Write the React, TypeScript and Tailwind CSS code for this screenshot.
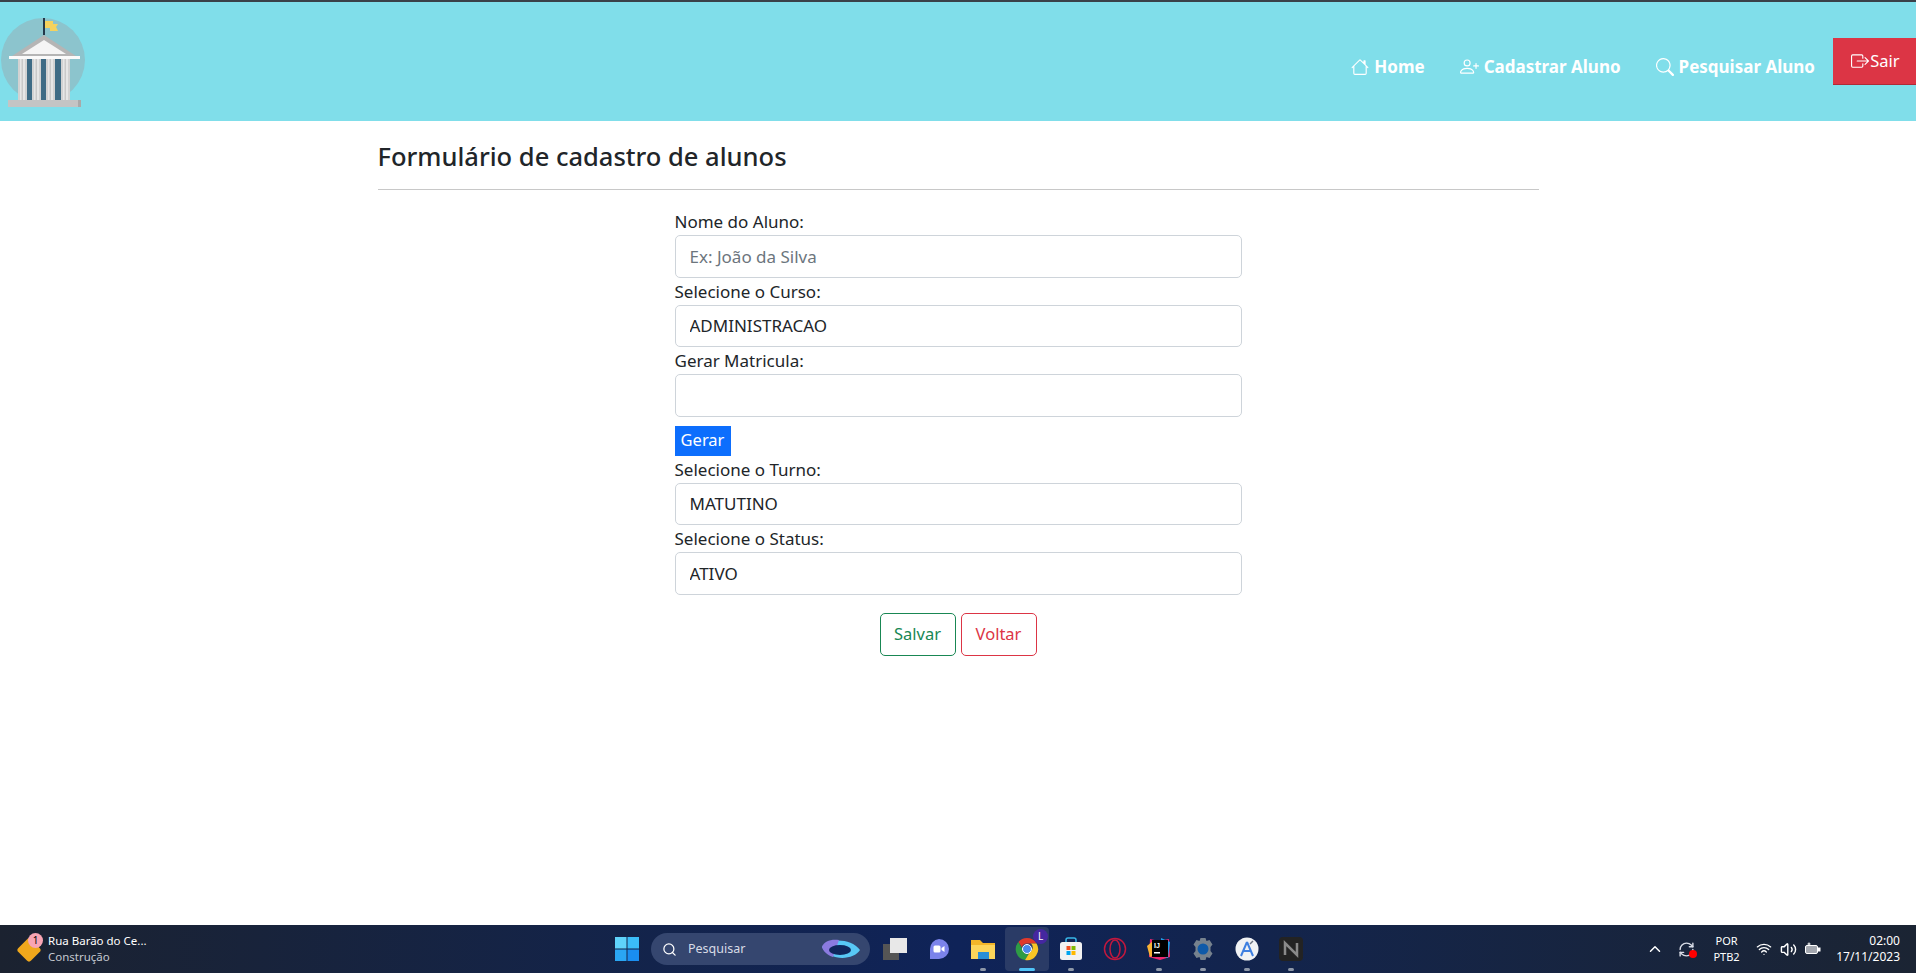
import {BsBoxArrowRight, BsHouse, BsPersonPlus, BsSearch} from 'react-icons/bs';
import {LuChevronUp, LuRefreshCw, LuSearch, LuVolume2, LuWifi} from 'react-icons/lu';

const Logo = () => (
  <svg width="86" height="96" viewBox="0 0 86 96">
    <circle cx="43" cy="44" r="42" fill="#8cc4cd" />
    <rect x="43" y="2" width="2" height="17" fill="#24384a" />
    <path d="M45 5h8v3h5l-2 3 2 4h-8v-3h-5z" fill="#f5d25e" />
    <path d="M44 19 L12 40 H76 Z" fill="#b5b5b5" />
    <path d="M44 24 L22 38 H66 Z" fill="#f5f5f5" />
    <rect x="9" y="40" width="71" height="3" fill="#fafafa" />
    <rect x="27" y="43" width="35" height="41" fill="#3e6b85" />
    {[18, 32, 46, 61].map((x) => (
      <g key={x}>
        <rect x={x} y="43" width="9" height="41" fill="#d2d2d2" />
        <rect x={x + 2} y="43" width="5" height="41" fill="#e6e6e6" />
        <rect x={x + 3.5} y="43" width="1.500" height="41" fill="#c9c9c9" />
      </g>
    ))}
    <rect x="8" y="84" width="73" height="7" fill="#c4c4c4" />
    <rect x="78" y="84" width="3" height="7" fill="#a9a9a9" />
  </svg>
);

const Field = ({label, value, placeholder}: {label: string; value?: string; placeholder?: string}) => (
  <div className="flex flex-col">
    <label className="h-[27px] leading-[27px] text-[#212529]">{label}</label>
    <input
      readOnly
      value={value}
      placeholder={placeholder}
      className="h-[42.500px] w-full rounded-[5px] border border-[#ced4da] bg-white px-[14px] text-[#212529] placeholder:text-[#6c757d] outline-none"
    />
  </div>
);

const NavItem = ({icon, text}: {icon: React.ReactNode; text: string}) => (
  <a className="flex items-center gap-[5px] text-white font-bold text-[17px]">
    {icon}
    {text}
  </a>
);

const AppIcon = ({children, dot, active}: {children: React.ReactNode; dot?: boolean; active?: boolean}) => (
  <div className={`relative flex h-[44px] w-[44px] items-center justify-center rounded ${active ? 'bg-[#2a3b66]' : ''}`}>
    {children}
    {dot && !active && <span className="absolute bottom-0 h-[3px] w-[6px] rounded-full bg-[#8d97a8]" />}
    {active && <span className="absolute bottom-0 h-[3px] w-[16px] rounded-full bg-[#4fc3f7]" />}
  </div>
);

const Taskbar = () => (
  <footer className="flex h-[48px] items-center bg-gradient-to-r from-[#1b2230] via-[#0f2358] to-[#1b2433] text-white font-['Noto_Sans',sans-serif]">
    {/* Widget */}
    <div className="flex w-[610px] items-center pl-[18px]">
      <div className="relative h-[24px] w-[24px]">
        <div className="absolute left-[2px] top-[4px] h-[18px] w-[18px] rotate-45 rounded-[3px] bg-[#f0a81c]" />
        <span className="absolute left-[10px] top-[-4px] flex h-[15px] w-[15px] items-center justify-center rounded-full bg-[#f8a5b4] text-[10px] text-black">1</span>
      </div>
      <div className="ml-[6px] flex flex-col text-[11.500px] leading-[16px]">
        <span>Rua Barão do Ce...</span>
        <span className="text-[#c4c8d0]">Construção</span>
      </div>
    </div>

    {/* Start + search + apps */}
    <div className="flex items-center">
      <svg width="24" height="24" viewBox="0 0 24 24" className="ml-[5px] mr-[12px]">
        <rect x="0" y="0" width="11.500" height="11.500" fill="#5fd3fb" />
        <rect x="12.500" y="0" width="11.500" height="11.500" fill="#3bbdf9" />
        <rect x="0" y="12.500" width="11.500" height="11.500" fill="#2aa6f3" />
        <rect x="12.500" y="12.500" width="11.500" height="11.500" fill="#1a8ef0" />
      </svg>
      <div className="flex h-[32px] w-[219px] items-center rounded-full bg-[#35466f] pl-[11px] pr-[9px]">
        <LuSearch size={15} className="text-white" />
        <span className="ml-[11px] flex-1 text-[12.500px] text-[#d8dce6]">Pesquisar</span>
        <svg width="40" height="22" viewBox="0 0 40 22">
          <path d="M1 9C7 0 30 0 39 12C33 22 9 24 1 9Z" fill="#58c8f5" />
          <path d="M1 9C3 3 10 1 18 2L12 19C6 17 2 13 1 9Z" fill="#8b7be0" />
          <ellipse cx="19" cy="12" rx="11" ry="5" fill="#10275c" />
        </svg>
      </div>
      <div className="ml-[3px] flex items-center">
        <AppIcon>
          <div className="relative h-[22px] w-[24px]">
            <div className="absolute bottom-0 left-0 h-[16px] w-[16px] bg-[#555]" />
            <div className="absolute right-0 top-0 h-[15px] w-[17px] bg-[#e8e8e8]" />
          </div>
        </AppIcon>
        <AppIcon>
          <svg width="24" height="24" viewBox="0 0 24 24">
            <path d="M12 2a10 10 0 0 1 0 20H3V12A10 10 0 0 1 12 2Z" fill="#7b83eb" />
            <rect x="6.500" y="8.500" width="7" height="7" rx="1.500" fill="#fff" />
            <path d="M14.500 11l3-2v6l-3-2z" fill="#fff" />
          </svg>
        </AppIcon>
        <AppIcon dot>
          <svg width="26" height="24" viewBox="0 0 26 24">
            <path d="M1 3h9l3 3h12v16H1z" fill="#f3b629" />
            <path d="M1 8h24v14H1z" fill="#fcd55a" />
            <rect x="8" y="15" width="11" height="7" fill="#2a8fd8" />
          </svg>
        </AppIcon>
        <AppIcon active>
          <svg width="24" height="24" viewBox="0 0 24 24">
            <path d="M12 1a11 11 0 0 1 9.500 5.500H12a5.500 5.500 0 0 0-5.200 3.700L3.400 5A11 11 0 0 1 12 1Z" fill="#e0392b" />
            <path d="M3.400 5l4.500 8a5.500 5.500 0 0 0 5.700 4.300L10 23A11 11 0 0 1 3.400 5Z" fill="#2e9c45" />
            <path d="M21.500 6.500A11 11 0 0 1 10 23l4.600-7.500a5.500 5.500 0 0 0 1.400-9z" fill="#f8c625" />
            <circle cx="12" cy="12" r="4.500" fill="#4a89ed" stroke="#fff" strokeWidth="1" />
          </svg>
          <span className="absolute right-[1px] top-[2px] flex h-[15px] w-[15px] items-center justify-center rounded-full bg-[#4527a0] text-[10px]">L</span>
        </AppIcon>
        <AppIcon dot>
          <svg width="24" height="24" viewBox="0 0 24 24">
            <path d="M7 5V3a2 2 0 0 1 2-2h6a2 2 0 0 1 2 2v2" fill="none" stroke="#38b6e8" strokeWidth="1.500" />
            <rect x="1" y="5" width="22" height="18" rx="2.500" fill="#f2f2f2" />
            <rect x="7.500" y="9" width="4" height="4" fill="#f25022" />
            <rect x="12.500" y="9" width="4" height="4" fill="#7fba00" />
            <rect x="7.500" y="14" width="4" height="4" fill="#00a4ef" />
            <rect x="12.500" y="14" width="4" height="4" fill="#ffb900" />
          </svg>
        </AppIcon>
        <AppIcon>
          <svg width="24" height="24" viewBox="0 0 24 24" fill="none" stroke="#c2183e" strokeWidth="1.500">
            <circle cx="12" cy="12" r="10.500" />
            <ellipse cx="12" cy="12" rx="5" ry="9" />
          </svg>
        </AppIcon>
        <AppIcon dot>
          <svg width="24" height="24" viewBox="0 0 24 24">
            <path d="M3 2l9 2 10-2 1 18-10 3-11-3z" fill="#f0266f" />
            <path d="M14 1l9 4-2 16-7-2z" fill="#1f9ee8" />
            <path d="M0 9l6-5 2 14-5 2z" fill="#f9b233" />
            <rect x="5" y="3" width="16" height="17" fill="#000" />
            <text x="7" y="11" fill="#fff" fontSize="7" fontWeight="700" fontFamily="Liberation Sans, sans-serif">IJ</text>
            <rect x="7" y="15" width="6" height="1.500" fill="#fff" />
          </svg>
        </AppIcon>
        <AppIcon dot>
          <svg width="24" height="24" viewBox="0 0 24 24">
            <path d="M9.500 1h5l1 3 3-1 3 4.500-2 2.500v4l2 2.500-3 4.500-3-1-1 3h-5l-1-3-3 1-3-4.500 2-2.500v-4l-2-2.500 3-4.500 3 1z" fill="#76828e" />
            <circle cx="12" cy="12" r="5.500" fill="#0f5aa8" />
          </svg>
        </AppIcon>
        <AppIcon dot>
          <svg width="24" height="24" viewBox="0 0 24 24">
            <circle cx="12" cy="12" r="11.500" fill="#f0f2f4" />
            <path d="M12 5 6 19M12 5l6 14M8 14h8" stroke="#3d7fe0" strokeWidth="2" fill="none" />
            <path d="M15 7l3-3" stroke="#6b7280" strokeWidth="1.500" />
          </svg>
        </AppIcon>
        <AppIcon dot>
          <svg width="24" height="24" viewBox="0 0 24 24">
            <rect x="0" y="0" width="24" height="24" rx="4" fill="#232323" />
            <path d="M6 18V6l12 12V6" stroke="#8a8a8a" strokeWidth="2.500" fill="none" />
          </svg>
        </AppIcon>
      </div>
    </div>

    {/* Tray */}
    <div className="ml-auto flex items-center pr-[16px]">
      <LuChevronUp size={18} />
      <div className="relative ml-[14px]">
        <LuRefreshCw size={17} className="text-[#d8dce6]" />
        <span className="absolute bottom-0 right-[-2px] h-[8px] w-[8px] rounded-full bg-[#f00]" />
      </div>
      <div className="ml-[18px] flex flex-col items-center text-[11px] leading-[16px]">
        <span>POR</span>
        <span>PTB2</span>
      </div>
      <LuWifi size={16} className="ml-[16px]" />
      <LuVolume2 size={17} className="ml-[8px]" />
      <svg width="17" height="14" viewBox="0 0 17 14" className="ml-[7px]" fill="none" stroke="#fff">
        <rect x="1.500" y="3.500" width="12" height="8" rx="1.500" fill="#fff" fillOpacity="0.6" />
        <rect x="14" y="6" width="2" height="3" fill="#fff" />
        <path d="M5 0.500v3M3.500 2h3" />
      </svg>
      <div className="ml-[15.500px] flex flex-col items-end text-[12px] leading-[16px]">
        <span>02:00</span>
        <span>17/11/2023</span>
      </div>
    </div>
  </footer>
);

const App = () => {
  return (
    <div className="flex h-[973px] flex-col overflow-hidden bg-white font-['Noto_Sans',sans-serif] text-[17px] text-[#212529]">
      <div className="h-[2px] bg-[#3a4149]" />

      {/* Navbar */}
      <nav className="flex h-[119px] items-start justify-between bg-[#80deea]">
        <div className="pt-[14px]">
          <Logo />
        </div>
        <div className="flex items-center pt-[36px]">
          <div className="flex items-center gap-[35px] pt-[7px]">
            <NavItem icon={<BsHouse size={18} />} text="Home" />
            <NavItem icon={<BsPersonPlus size={19} />} text="Cadastrar Aluno" />
            <NavItem icon={<BsSearch size={18} />} text="Pesquisar Aluno" />
          </div>
          <button className="ml-[18px] mb-[3px] flex h-[47px] w-[83px] items-center justify-center gap-[1px] border-b border-[#b02a37] bg-[#dc3545] pl-[2px] text-[16.500px] text-white">
            <BsBoxArrowRight size={18} />
            Sair
          </button>
        </div>
      </nav>

      {/* Content */}
      <main className="mx-auto w-[1161px] flex-1">
        <h2 className="mt-[18px] text-[25.500px] font-medium leading-[34px] text-[#212529]">Formulário de cadastro de alunos</h2>
        <hr className="mt-[16px] border-t border-[#c8c8c8]" />
        <form className="mx-auto mt-[18px] w-[567px]">
          <Field label="Nome do Aluno:" placeholder="Ex: João da Silva" />
          <Field label="Selecione o Curso:" value="ADMINISTRACAO" />
          <Field label="Gerar Matricula:" />
          <button type="button" className="mt-[9px] block h-[30px] w-[56px] bg-[#0d6efd] text-[16.500px] text-white">Gerar</button>
          <Field label="Selecione o Turno:" value="MATUTINO" />
          <Field label="Selecione o Status:" value="ATIVO" />
          <div className="mt-[18px] flex justify-center gap-[5px]">
            <button type="button" className="h-[43px] w-[76px] rounded-[5px] border border-[#198754] text-[16.500px] text-[#198754]">Salvar</button>
            <button type="button" className="h-[43px] w-[76px] rounded-[5px] border border-[#dc3545] text-[16.500px] text-[#dc3545]">Voltar</button>
          </div>
        </form>
      </main>

      <Taskbar />
    </div>
  );
};

export default App;
